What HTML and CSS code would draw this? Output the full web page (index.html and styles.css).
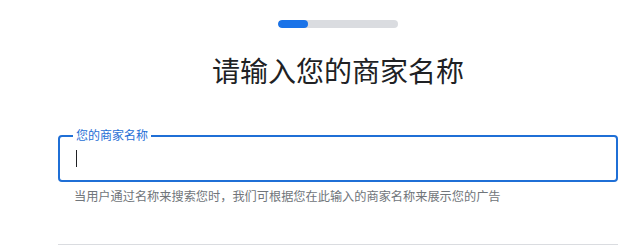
FILE: index.html
```html
<!DOCTYPE html>
<html lang="zh-CN">
<head>
<meta charset="utf-8">
<link rel="stylesheet" href="styles.css">
</head>
<body>
<div class="page">
  <div class="progress"><div class="progress-fill"></div></div>
  <h1 class="title">请输入您的商家名称</h1>
  <div class="field">
    <span class="field-label">您的商家名称</span>
    <span class="caret"></span>
  </div>
  <p class="helper">当用户通过名称来搜索您时，我们可根据您在此输入的商家名称来展示您的广告</p>
  <div class="divider"></div>
</div>
</body>
</html>
```
FILE: styles.css
```css
html, body {
  margin: 0;
  padding: 0;
  background: #fff;
}
body {
  font-family: "Noto Sans CJK SC", "Noto Sans", sans-serif;
  color: #202124;
}
.page {
  width: 560px;
  margin-left: 58px;
  display: flex;
  flex-direction: column;
  align-items: center;
  padding-top: 20px;
}
.progress {
  width: 120px;
  height: 8px;
  border-radius: 4px;
  background: #dadce0;
  overflow: hidden;
}
.progress-fill {
  width: 30px;
  height: 8px;
  border-radius: 4px;
  background: #1a73e8;
}
.title {
  margin: 22px 0 0;
  font-size: 28px;
  font-weight: 400;
  line-height: 40px;
  color: #202124;
}
.field {
  position: relative;
  align-self: stretch;
  box-sizing: border-box;
  height: 47px;
  margin-top: 45px;
  border: 2px solid #1f6fd6;
  border-radius: 4px;
  display: flex;
  align-items: center;
  padding-left: 16px;
}
.field-label {
  position: absolute;
  left: 13px;
  top: -10px;
  padding: 0 3px;
  background: #fff;
  color: #1f6fd6;
  font-size: 12px;
  line-height: 16px;
}
.caret {
  width: 1px;
  height: 17px;
  background: #202124;
}
.helper {
  align-self: stretch;
  margin: 5px 0 0;
  padding-left: 16px;
  font-size: 12.2px;
  line-height: 18px;
  color: #70757a;
}
.divider {
  align-self: stretch;
  height: 1px;
  background: #dadce0;
  margin-top: 39px;
}
```
